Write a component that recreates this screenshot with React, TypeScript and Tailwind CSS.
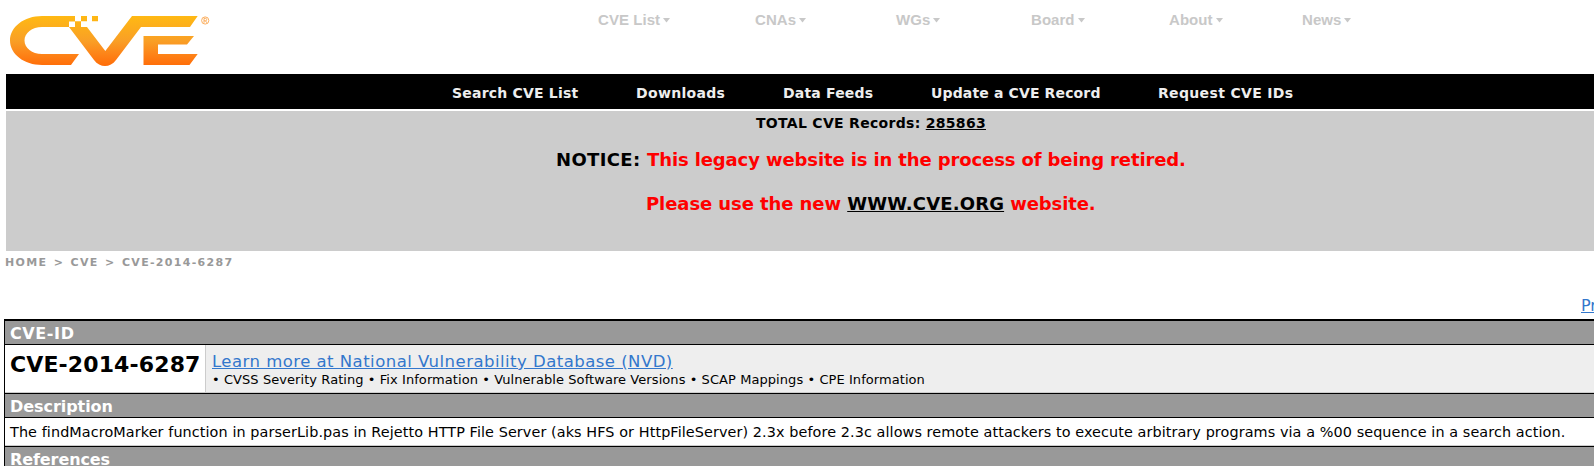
function CveLogo() {
  return (
    <svg width="202" height="52" viewBox="9 15 202 52" aria-label="CVE">
      <defs>
        <linearGradient id="cveGradient" x1="0" y1="16" x2="0" y2="66" gradientUnits="userSpaceOnUse">
          <stop offset="0" stopColor="#ffb913" />
          <stop offset="0.5" stopColor="#f99f26" />
          <stop offset="0.75" stopColor="#fd8519" />
          <stop offset="1" stopColor="#ff6c08" />
        </linearGradient>
      </defs>
      <g fill="url(#cveGradient)">
        <path d="M75 16H42C24 16 10 27 10 40.5S24 65 42 65H71L79 54H42C32 54 24.5 48 24.5 40.5S32 27 42 27H69L94 60C100 68 110 68 116 60L141 27H190L197.700 16H132L105.300 51L87 27H81V21.500H75V27H69V21.500H75Z" />
        <path d="M75 21.500H81V27H75ZM81 16H87V21.300H81ZM92 16H98V21.300H92Z" />
        <path d="M143.500 36H194L187 44.500H158V54H197.700L189.500 65H143.500Z" />
      </g>
      <circle cx="205.200" cy="20.500" r="3.600" fill="none" stroke="#fba64e" strokeWidth="0.900" />
      <path d="M204 22.800V18.400H205.500A1.200 1.200 0 0 1 205.500 20.800H204M205.500 20.800L206.800 22.800" fill="none" stroke="#fba64e" strokeWidth="0.900" />
    </svg>
  );
}

const menus = [
  { label: "CVE List", cell: "w-[157px]" },
  { label: "CNAs", cell: "w-[141px]" },
  { label: "WGs", cell: "w-[135px]" },
  { label: "Board", cell: "w-[138px]" },
  { label: "About", cell: "w-[133px]" },
  { label: "News", cell: "w-[60px]" },
];

const links = [
  { label: "Search CVE List", cell: "w-[184px] tracking-[0.2px]" },
  { label: "Downloads", cell: "w-[147px] tracking-[0.32px]" },
  { label: "Data Feeds", cell: "w-[148px] tracking-[0.18px]" },
  { label: "Update a CVE Record", cell: "w-[227px] tracking-[0.14px]" },
  { label: "Request CVE IDs", cell: "w-[140px] tracking-[0.34px]" },
];

function SectionHeader({ title, spacing }: { title: string; spacing: string }) {
  return (
    <div className="h-6 border-b border-black bg-[#999] pl-[5px] text-base font-bold leading-[26px] text-white">
      <span className={spacing}>{title}</span>
    </div>
  );
}

export default function App() {
  return (
    <div className="h-[466px] w-[1594px] overflow-hidden whitespace-nowrap bg-white font-['DejaVu_Sans',Verdana,sans-serif] text-black">
      <header className="flex h-[74px] items-start pl-[9px] pt-[15px]">
        <CveLogo />
        <nav className="-mt-[5px] ml-[387px] flex font-['Liberation_Sans',Arial,sans-serif] text-[15px] font-bold leading-5 tracking-[0.05px] text-[#c8c8c8]">
          {menus.map((m) => (
            <div key={m.label} className={`flex shrink-0 items-center gap-[3px] ${m.cell}`}>
              <span>{m.label}</span>
              <svg width="7" height="5" viewBox="0 0 7 5" className="mt-px">
                <path d="M0 0H7L3.500 4.500Z" fill="#c8c8c8" />
              </svg>
            </div>
          ))}
        </nav>
      </header>

      <nav className="ml-[6px] flex h-[35px] bg-black pl-[446px] text-sm font-bold leading-[38px] text-[#eee]">
        {links.map((l) => (
          <a key={l.label} className={`shrink-0 ${l.cell}`}>{l.label}</a>
        ))}
      </nav>

      <section className="ml-[6px] mt-[2px] h-[140px] bg-[#ccc] font-bold">
        <p className="pl-[750px] pt-[2px] text-sm leading-[20px] tracking-[0.3px]">
          TOTAL CVE Records: <a className="underline">285863</a>
        </p>
        <p className="pl-[550px] pt-[15px] text-lg leading-6">
          <span className="tracking-[0.34px]">NOTICE: </span>
          <span className="tracking-[-0.12px] text-[#f00]">This legacy website is in the process of being retired.</span>
        </p>
        <p className="pl-[640px] pt-5 text-lg leading-6 text-[#f00]">
          <span className="tracking-[-0.08px]">Please use the new </span>
          <a className="tracking-[0.16px] text-black underline">WWW.CVE.ORG</a>
          <span className="tracking-[-0.12px]"> website.</span>
        </p>
      </section>

      <div className="h-[46px] pl-[5px] pt-1 text-[11px] font-bold leading-4 tracking-[1.3px] text-[#999] [word-spacing:1.3px]">
        HOME &gt; CVE &gt; CVE-2014-6287
      </div>
      <div className="h-[22px] overflow-hidden pl-[1581px] text-base leading-[18px] text-[#3377cc]">
        <a className="underline">Printer-Friendly View</a>
      </div>

      <main className="ml-1 border-l border-t-2 border-black">
        <SectionHeader title="CVE-ID" spacing="tracking-[0.6px]" />
        <div className="flex h-[49px] border-b border-black">
          <h1 className="w-[200px] shrink-0 border-b border-[#ccc] pl-[5px] text-[22px] font-bold leading-[39px] tracking-[0.12px]">CVE-2014-6287</h1>
          <div className="grow border-b border-l border-[#ccc] bg-[#eee] pl-[6px] pt-[6px]">
            <div className="text-[16.5px] leading-[21px] tracking-[0.47px] text-[#3377cc]">
              <a className="underline">Learn more at National Vulnerability Database (NVD)</a>
            </div>
            <div className="text-[13px] leading-4 tracking-[0.068px]">
              • CVSS Severity Rating • Fix Information • Vulnerable Software Versions • SCAP Mappings • CPE Information
            </div>
          </div>
        </div>
        <SectionHeader title="Description" spacing="tracking-[-0.06px]" />
        <div className="h-[29px] border-b border-black">
          <p className="h-[28px] border-b border-[#ccc] pl-[5px] text-[14.4px] leading-[28px] tracking-[0.086px]">
            The findMacroMarker function in parserLib.pas in Rejetto HTTP File Server (aks HFS or HttpFileServer) 2.3x before 2.3c allows remote attackers to execute arbitrary programs via a %00 sequence in a search action.
          </p>
        </div>
        <SectionHeader title="References" spacing="tracking-[-0.1px]" />
      </main>
    </div>
  );
}
